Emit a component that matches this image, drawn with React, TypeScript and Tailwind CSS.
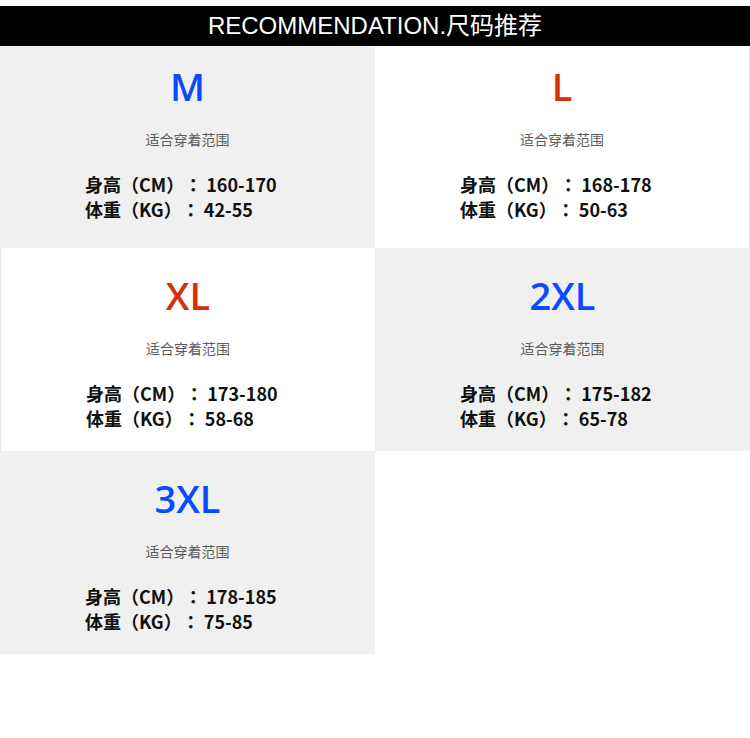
const sizes = [
  { label: 'M', color: 'text-[#0a4bff]', bg: 'bg-[#f0f0f0]', height: '160-170', weight: '42-55' },
  { label: 'L', color: 'text-[#d5300e]', bg: 'bg-white border-r border-[#e6e6e6]', height: '168-178', weight: '50-63' },
  { label: 'XL', color: 'text-[#d5300e]', bg: 'bg-white border-l border-[#e6e6e6]', height: '173-180', weight: '58-68' },
  { label: '2XL', color: 'text-[#0a4bff]', bg: 'bg-[#f0f0f0]', height: '175-182', weight: '65-78' },
  { label: '3XL', color: 'text-[#0a4bff]', bg: 'bg-[#f0f0f0]', height: '178-185', weight: '75-85' },
];

function SizeCell({ item, first }: { item: (typeof sizes)[number]; first: boolean }) {
  return (
    <div className={`${item.bg} flex flex-col ${first ? 'h-[202px] pt-[17px]' : 'h-[203px] pt-[24px]'}`}>
      <div className={`${item.color} text-center text-[38px] leading-[46px] font-semibold font-['Open_Sans','Noto_Sans',sans-serif]`}>
        {item.label}
      </div>
      <div className="mt-[20px] text-center text-[14px] leading-[20px] text-[#5c5c5c] font-['Noto_Sans_CJK_SC',sans-serif]">
        适合穿着范围
      </div>
      <div className="mt-[23px] pl-[85px] text-[18px] leading-[25px] font-bold text-[#111] [text-spacing-trim:space-all] font-['Noto_Sans_CJK_TC',sans-serif]">
        <div>身高（CM）：&nbsp;{item.height}</div>
        <div>体重（KG）：&nbsp;{item.weight}</div>
      </div>
    </div>
  );
}

export default function App() {
  return (
    <div className="w-[750px] h-[738px] bg-white">
      <div className="h-[6px]" />
      <div className="h-[40px] bg-black flex items-center justify-center text-white text-[24px] font-['Liberation_Sans','Noto_Sans_CJK_SC',sans-serif]">
        RECOMMENDATION.尺码推荐
      </div>
      <div className="grid grid-cols-2">
        {sizes.map((s, i) => (
          <SizeCell key={s.label} item={s} first={i < 2} />
        ))}
      </div>
    </div>
  );
}
